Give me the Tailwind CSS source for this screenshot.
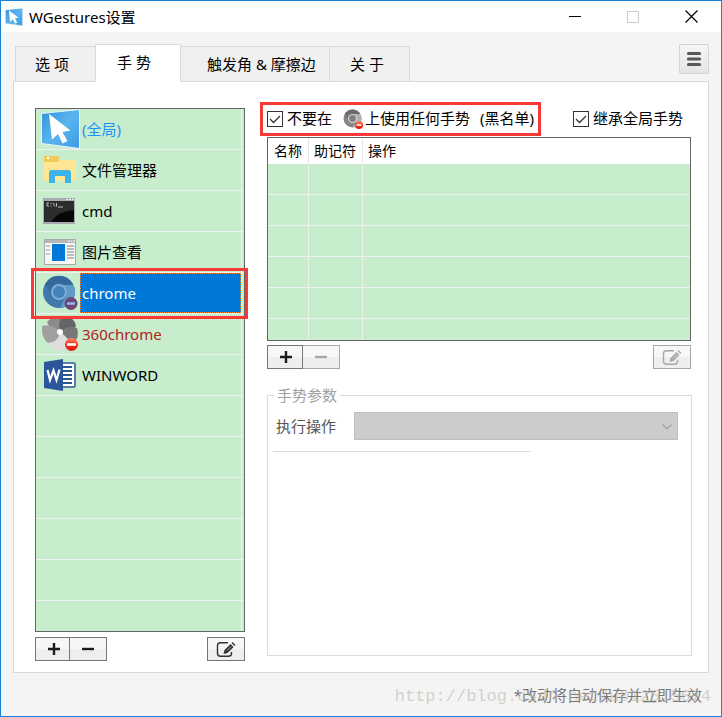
<!DOCTYPE html>
<html lang="zh-CN">
<head>
<meta charset="utf-8">
<title>WGestures设置</title>
<script src="https://cdn.jsdelivr.net/npm/@tailwindcss/browser@4"></script>
</head>
<body class="font-['Noto_Sans','Noto_Sans_CJK_SC',sans-serif] text-[15px] leading-5 text-black">
<svg class="absolute h-0 w-0" aria-hidden="true">
  <defs>
    <linearGradient id="sky" x1="0" y1="0" x2="1" y2="1"><stop offset="0" stop-color="#2f93dc"/><stop offset=".5" stop-color="#5bb4ee"/><stop offset="1" stop-color="#3a9ae6"/></linearGradient>
    <linearGradient id="redBall" x1="0" y1="0" x2="0" y2="1"><stop offset="0" stop-color="#ff8a75"/><stop offset=".5" stop-color="#f0301c"/><stop offset="1" stop-color="#d81a10"/></linearGradient>
    <symbol id="logo" viewBox="0 0 39 40">
      <path d="M.5 4.500 38.500.500V39.500L.500 34.500Z" fill="url(#sky)" stroke="#eaf6ff"/>
      <path d="M8 5 29.500 21.500 21.500 23 26.500 32 21.500 34.500 17 25 11 30.500Z" fill="#fff"/>
    </symbol>
    <symbol id="edit" viewBox="0 0 20 17">
      <path d="M12 1.800H4.500Q1.500 1.800 1.500 4.500V12.500Q1.500 15.200 4.500 15.200H12.500Q15.500 15.200 15.500 12.500V11" fill="none" stroke="currentColor" stroke-width="1.400"/>
      <path d="M7.500 13 8.500 9 14.500 3 17.500 6 11.500 12Z" fill="currentColor"/>
      <path d="M15.500 2 16.500 1 19.500 4 18.500 5Z" fill="currentColor"/>
      <path d="M11 9.500 15 5.500" stroke="#fff" stroke-width=".6"/>
    </symbol>
  </defs>
</svg>

<div class="flex min-h-screen flex-col border border-[#1883d7] bg-[#f4f4f4]">
  <header class="flex h-[31px] shrink-0 items-center bg-white pr-px pl-1">
    <svg class="h-[18px] w-[18px]"><use href="#logo"/></svg>
    <h1 class="ml-1.5 flex-1">WGestures设置</h1>
    <button aria-label="最小化" class="flex h-full w-[58px] items-center justify-center"><svg width="12" height="12"><path d="M0 5.500H12" stroke="#000"/></svg></button>
    <button aria-label="最大化" disabled class="flex h-full w-[58px] items-center justify-center"><svg width="12" height="12"><path d="M.5.5H11.500V11.500H.5Z" fill="none" stroke="#ccc"/></svg></button>
    <button aria-label="关闭" class="flex h-full w-[58px] items-center justify-center"><svg width="13" height="13"><path d="M.5.5 12.500 12.500M12.500.5.5 12.500" stroke="#000" stroke-width="1.200"/></svg></button>
  </header>

  <nav class="flex h-[49px] shrink-0 items-end pr-3 pl-3.5">
    <button class="h-[35px] w-20 border-t border-l border-[#d9d9d9] bg-[#f0f0f0] pl-[19px] text-left">选 项</button>
    <button aria-current="page" class="relative -mb-px h-[38px] w-[86px] border-x border-t border-[#d9d9d9] bg-white pb-1 pl-[21px] text-left">手 势</button>
    <button class="h-[35px] w-[148px] border-t border-[#d9d9d9] bg-[#f0f0f0] pl-[26px] text-left whitespace-nowrap">触发角 &amp; 摩擦边</button>
    <button class="h-[35px] w-[81px] border-x border-t border-[#d9d9d9] bg-[#f0f0f0] pl-5 text-left">关 于</button>
    <button aria-label="菜单" class="mb-[7px] ml-auto flex h-[30px] w-[30px] items-center justify-center rounded-xs border border-[#d4d4d4] bg-linear-to-b from-[#f6f6f6] to-[#e4e4e4]">
      <svg width="16" height="16"><path d="M2.500 2.500H13.500M2.500 8H13.500M2.500 13.500H13.500" stroke="#585858" stroke-width="3.200" stroke-linecap="round"/></svg>
    </button>
  </nav>

  <main class="mx-3 flex flex-1 gap-[22px] border border-[#d9d9d9] bg-white pt-5 pr-4 pb-[11px] pl-[21px]">
    <section class="flex w-[210px] shrink-0 flex-col pt-1.5">
      <ul role="listbox" aria-label="应用程序" class="flex flex-1 flex-col border border-[#646464] bg-[#c7edcc]">
        <li role="option" class="flex h-[41px] border-b border-[#f0f0f0]">
          <span class="flex w-11 items-center justify-end"><svg class="h-10 w-[39px]"><use href="#logo"/></svg></span>
          <span class="mr-0.5 flex flex-1 items-center border-r border-[#f0f0f0] pl-0.5 text-[#1e90ff]">(全局)</span>
        </li>
        <li role="option" class="flex h-[41px] border-b border-[#f0f0f0]">
          <span class="flex w-11 items-center pl-2"><svg width="32" height="32" viewBox="0 0 32 32"><path d="M0 5V3Q0 2 1 2H13Q15 2 15 4V6H31Q32 6 32 7V26H0Z" fill="#f3c95a"/><path d="M0 8H14L16 6H32V27H0Z" fill="#ffe694"/><path d="M3 3H5V5H3Z" fill="#fff"/><path d="M5 29V19Q5 16 8 16H24Q27 16 27 19V29H21V22H11V29Z" fill="#3cb4e7"/></svg></span>
          <span class="mr-0.5 flex flex-1 items-center border-r border-[#f0f0f0] pl-0.5">文件管理器</span>
        </li>
        <li role="option" class="flex h-[41px] border-b border-[#f0f0f0]">
          <span class="flex w-11 items-center pl-[7px]"><svg width="32" height="28" viewBox="0 0 32 28"><path d="M0 1H32V27H0Z" fill="#a6abb3"/><path d="M1 4H31V25H1Z" fill="#080808"/><path d="M1 4H31V13Q15 14 8 25H1Z" fill="#2d2d2d"/><path d="M23 2.500H25M26 2.500H28M29 2.500H31" stroke="#eee"/><path d="M6 6H4V9H6M8 6V7M8 8.500V9.500M10 6 12 9.500M13.500 6V9.500M15 10H20" fill="none" stroke="#bbb"/></svg></span>
          <span class="mr-0.5 flex flex-1 items-center border-r border-[#f0f0f0] pl-0.5">cmd</span>
        </li>
        <li role="option" class="flex h-[41px] border-b border-[#f0f0f0]">
          <span class="flex w-11 items-center pl-2"><svg width="32" height="26" viewBox="0 0 32 26"><path d="M.5.5H31.500V25.500H.5Z" fill="#f7f7f7" stroke="#a8a8a8"/><path d="M1 1H31V4H1Z" fill="#b8b8b8"/><path d="M24 2H26M27 2H28M29 2H31" stroke="#fff"/><path d="M2 7H6M2 11H6M2 15H6" stroke="#999"/><path d="M23 7H30M23 10H30M23 13H30M23 16H30M23 19H30" stroke="#aaa" stroke-width="1.500"/><path d="M8 5H21V22H8Z" fill="#0078d7"/></svg></span>
          <span class="mr-0.5 flex flex-1 items-center border-r border-[#f0f0f0] pl-0.5">图片查看</span>
        </li>
        <li role="option" aria-selected="true" class="relative flex h-[41px] border-b border-[#f0f0f0]">
          <span class="flex w-11 items-center pl-[7px]"><svg width="36" height="36" viewBox="0 0 36 36"><circle cx="16" cy="17" r="16" fill="#3f79ae"/><path d="M2 9A16 16 0 0 1 30 9L22 11A8 8 0 0 0 9 20Z" fill="#35699d"/><path d="M16 10H30.400A16 16 0 0 1 17 33L23 21Q26 15 20 10Z" fill="#5f9ac8"/><circle cx="16" cy="17" r="8" fill="#7eafd6"/><circle cx="16" cy="17" r="6" fill="#4582b9"/><circle cx="28" cy="28.500" r="6.500" fill="#704578"/><path d="M24 28.500H32" stroke="#9abbe5" stroke-width="2.500"/></svg></span>
          <span class="mr-0.5 flex flex-1 border-r border-[#f0f0f0]"><span class="flex flex-1 items-center border border-dotted border-[#ff8728] bg-[#0078d7] pl-px text-white">chrome</span></span>
          <span class="pointer-events-none absolute -top-[5px] -right-1 -bottom-[6px] -left-[5px] z-10 border-3 border-[#fb3838]"></span>
        </li>
        <li role="option" class="flex h-[41px] border-b border-[#f0f0f0]">
          <span class="flex w-11 items-center pl-1.5"><svg width="38" height="36" viewBox="0 0 38 36"><circle cx="18" cy="17" r="8" fill="#aaa"/><path d="M18 16Q9 16 5 6Q14-3 20 1Q24 9 18 16Z" fill="#8b8b8b"/><path d="M18 16Q15 6 21 0Q32 0 34 10Q28 18 18 16Z" fill="#656565"/><path d="M18 16Q27 8 35 12Q38 21 31 28Q21 26 18 16Z" fill="#777"/><path d="M18 16Q29 23 28 31Q17 38 8 30Q9 21 18 16Z" fill="#dedede"/><path d="M18 16Q16 27 6 27Q-1 21 0 10Q10 7 18 16Z" fill="#a0a0a0"/><circle cx="18" cy="16" r="3" fill="#fff"/><circle cx="29.500" cy="28.500" r="6.500" fill="url(#redBall)"/><path d="M25 28.500H34" stroke="#fff" stroke-width="2.600"/></svg></span>
          <span class="mr-0.5 flex flex-1 items-center border-r border-[#f0f0f0] pl-0.5 text-[#b22222]">360chrome</span>
        </li>
        <li role="option" class="flex h-[41px] border-b border-[#f0f0f0]">
          <span class="flex w-11 items-center pl-2"><svg width="32" height="32" viewBox="0 0 32 32"><path d="M17 4H30Q31 4 31 5V27Q31 28 30 28H17Z" fill="#fff" stroke="#2b579a" stroke-width="1.500"/><path d="M18 8H28M18 12H28M18 16H28M18 20H28M18 24H28" stroke="#2b579a" stroke-width="1.800"/><path d="M0 3 19 0V32L0 29Z" fill="#2b579a"/><path d="M3.500 11 6 21 9.500 11.500 12.500 21 15.500 10.500" fill="none" stroke="#fff" stroke-width="2.200"/></svg></span>
          <span class="mr-0.5 flex flex-1 items-center border-r border-[#f0f0f0] pl-0.5">WINWORD</span>
        </li>
        <li role="presentation" class="flex h-[41px] border-b border-[#f0f0f0]"><span class="mr-0.5 flex-1 border-r border-[#f0f0f0]"></span></li>
        <li role="presentation" class="flex h-[41px] border-b border-[#f0f0f0]"><span class="mr-0.5 flex-1 border-r border-[#f0f0f0]"></span></li>
        <li role="presentation" class="flex h-[41px] border-b border-[#f0f0f0]"><span class="mr-0.5 flex-1 border-r border-[#f0f0f0]"></span></li>
        <li role="presentation" class="flex h-[41px] border-b border-[#f0f0f0]"><span class="mr-0.5 flex-1 border-r border-[#f0f0f0]"></span></li>
        <li role="presentation" class="flex h-[41px] border-b border-[#f0f0f0]"><span class="mr-0.5 flex-1 border-r border-[#f0f0f0]"></span></li>
        <li role="presentation" class="flex min-h-[30px] flex-1"><span class="mr-0.5 flex-1 border-r border-[#f0f0f0]"></span></li>
      </ul>
      <div class="mt-[5px] flex h-6">
        <button aria-label="添加应用" class="flex w-[35px] items-center justify-center border border-[#777] bg-linear-to-b from-[#f7f7f7] from-50% to-[#eee] to-50% pl-0.5"><svg width="12" height="12"><path d="M0 6H12M6 0V12" stroke="#1c1c1c" stroke-width="2.400"/></svg></button>
        <button aria-label="删除应用" class="-ml-px flex w-[38px] items-center justify-center border border-[#777] bg-linear-to-b from-[#f7f7f7] from-50% to-[#eee] to-50%"><svg width="12" height="12"><path d="M0 6H12" stroke="#1c1c1c" stroke-width="2.400"/></svg></button>
        <button aria-label="编辑应用" class="ml-auto flex w-[38px] items-center justify-center border border-[#777] bg-linear-to-b from-[#f7f7f7] from-50% to-[#eee] to-50% text-[#333]"><svg width="20" height="17"><use href="#edit"/></svg></button>
      </div>
    </section>

    <section class="flex min-w-0 flex-1 flex-col pb-[5px]">
      <div class="flex h-[34px] shrink-0 items-center justify-between pr-[9px] whitespace-nowrap">
        <div class="relative flex h-full items-center">
          <span class="relative flex"><input id="blacklist" type="checkbox" checked class="h-4 w-4 appearance-none border border-[#333] bg-white"><svg class="pointer-events-none absolute inset-0" width="16" height="16"><path d="M3 8 6.500 11.500 13 5" fill="none" stroke="#333" stroke-width="1.300"/></svg></span>
          <label for="blacklist" class="flex items-center pb-0.5 pl-1">不要在<svg class="mt-0.5 mr-0.5 ml-[11px]" width="20" height="20" viewBox="0 0 20 20"><circle cx="9.500" cy="9.500" r="9" fill="#858585"/><path d="M1.700 5A9 9 0 0 1 17.300 5L10 5A4.500 4.500 0 0 0 5 10Z" fill="#6b6b6b"/><path d="M9.500 5H17.300A9 9 0 0 1 9.500 18.500L13.500 11.500Q15 8 11 5Z" fill="#b0b0b0"/><circle cx="9.500" cy="9.500" r="4.600" fill="#d4d4d4"/><circle cx="9.500" cy="9.500" r="3.400" fill="#808080"/><circle cx="16" cy="16" r="4" fill="url(#redBall)"/><path d="M13.500 16H18.500" stroke="#fff" stroke-width="1.600"/></svg>上使用任何手势<span class="pl-2.5">(黑名单)</span></label>
          <span class="pointer-events-none absolute inset-y-0 -right-[7px] -left-[7px] border-3 border-[#fb3838]"></span>
        </div>
        <div class="flex items-center">
          <span class="relative flex"><input id="inherit" type="checkbox" checked class="h-4 w-4 appearance-none border border-[#333] bg-white"><svg class="pointer-events-none absolute inset-0" width="16" height="16"><path d="M3 8 6.500 11.500 13 5" fill="none" stroke="#333" stroke-width="1.300"/></svg></span>
          <label for="inherit" class="pb-0.5 pl-1">继承全局手势</label>
        </div>
      </div>

      <div class="mt-px mr-px border border-[#646464] bg-[#c7edcc]">
        <table class="w-full table-fixed border-separate border-spacing-0">
          <thead class="bg-white text-left text-sm">
            <tr class="h-[26px]">
              <th class="w-[41px] border-r border-[#e5e5e5] p-0 pl-1.5 font-normal whitespace-nowrap">名称</th>
              <th class="w-[54px] border-r border-[#e5e5e5] p-0 pl-[5px] font-normal whitespace-nowrap">助记符</th>
              <th class="p-0 pl-[5px] font-normal">操作</th>
            </tr>
          </thead>
          <tbody>
            <tr class="h-[31px]"><td class="border-r border-b border-[#f0f0f0]"></td><td class="border-r border-b border-[#f0f0f0]"></td><td class="border-b border-[#f0f0f0]"></td></tr>
            <tr class="h-[31px]"><td class="border-r border-b border-[#f0f0f0]"></td><td class="border-r border-b border-[#f0f0f0]"></td><td class="border-b border-[#f0f0f0]"></td></tr>
            <tr class="h-[31px]"><td class="border-r border-b border-[#f0f0f0]"></td><td class="border-r border-b border-[#f0f0f0]"></td><td class="border-b border-[#f0f0f0]"></td></tr>
            <tr class="h-[31px]"><td class="border-r border-b border-[#f0f0f0]"></td><td class="border-r border-b border-[#f0f0f0]"></td><td class="border-b border-[#f0f0f0]"></td></tr>
            <tr class="h-[31px]"><td class="border-r border-b border-[#f0f0f0]"></td><td class="border-r border-b border-[#f0f0f0]"></td><td class="border-b border-[#f0f0f0]"></td></tr>
            <tr class="h-[21px]"><td class="border-r border-[#f0f0f0]"></td><td class="border-r border-[#f0f0f0]"></td><td></td></tr>
          </tbody>
        </table>
      </div>

      <div class="mt-1 mr-px flex h-6 shrink-0">
        <button aria-label="添加手势" class="relative flex w-9 items-center justify-center border border-[#777] bg-linear-to-b from-[#f7f7f7] from-50% to-[#eee] to-50% pl-0.5"><svg width="12" height="12"><path d="M0 6H12M6 0V12" stroke="#1c1c1c" stroke-width="2.400"/></svg></button>
        <button aria-label="删除手势" disabled class="-ml-px flex w-[38px] items-center justify-center border border-[#a8a8a8] bg-linear-to-b from-[#f7f7f7] from-50% to-[#eee] to-50%"><svg width="12" height="12"><path d="M0 6H12" stroke="#a8a8a8" stroke-width="2.400"/></svg></button>
        <button aria-label="编辑手势" disabled class="ml-auto flex w-[38px] items-center justify-center border border-[#a8a8a8] bg-linear-to-b from-[#f7f7f7] from-50% to-[#eee] to-50% text-[#a8a8a8]"><svg width="20" height="17"><use href="#edit"/></svg></button>
      </div>

      <fieldset class="mt-4 min-w-0 flex-1 border border-[#dcdcdc] pr-[13px] pl-[5px]">
        <legend class="ml-px px-[3px] text-[#a0a0a0]">手势参数</legend>
        <div class="flex items-center pt-[7px] pl-[3px]">
          <label for="action" class="text-[#555]">执行操作</label>
          <div class="relative ml-[18px] flex flex-1">
            <select id="action" disabled class="h-7 w-full appearance-none border border-[#bfbfbf] bg-[#ccc] px-2"><option></option></select>
            <svg class="pointer-events-none absolute top-3 right-1.5" width="10" height="6"><path d="M.5.5 5 5 9.500.5" fill="none" stroke="#a0a0a0" stroke-width="1.200"/></svg>
          </div>
        </div>
        <hr class="mt-[11px] w-[258px] border-[#dcdcdc]">
      </fieldset>
    </section>
  </main>

  <footer class="relative flex h-[43px] shrink-0 items-center justify-end pr-[19px] text-[#777]">
    <p>*改动将自动保存并立即生效</p>
    <span class="pointer-events-none absolute top-3.5 right-2.5 font-['Liberation_Mono',monospace] text-[17px] text-[#b8b8b0]/60">http://blog.csdn.net/u012515674</span>
  </footer>
</div>
</body>
</html>
